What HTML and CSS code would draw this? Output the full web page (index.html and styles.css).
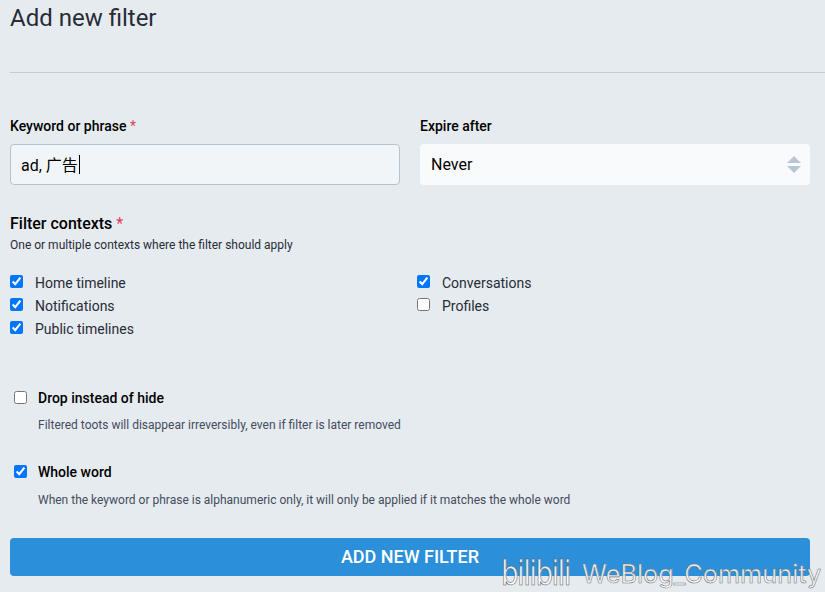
FILE: index.html
```html
<!DOCTYPE html>
<html lang="en">
<head>
<meta charset="utf-8">
<title>Add new filter</title>
<link rel="stylesheet" href="styles.css">
</head>
<body>
<main class="page">
  <h1 class="title">Add new filter</h1>
  <hr class="rule">
  <form class="form">
    <div class="fields">
      <div class="field">
        <label class="label">Keyword or phrase <abbr class="req">*</abbr></label>
        <div class="control control-input"><span class="typed">ad, 广告</span><span class="caret"></span></div>
      </div>
      <div class="field">
        <label class="label">Expire after</label>
        <div class="control control-select">
          <span>Never</span>
          <svg class="updown" width="14" height="17" viewBox="0 0 14 17"><path d="M7 0l7 7H0zM0 10h14l-7 7z" fill="#b9c6d6"/></svg>
        </div>
      </div>
    </div>
    <section class="contexts">
      <h2 class="ctx-title">Filter contexts <abbr class="req">*</abbr></h2>
      <p class="hint">One or multiple contexts where the filter should apply</p>
      <div class="ctx-grid">
        <div class="ctx-col">
          <label class="check"><input type="checkbox" checked>Home timeline</label>
          <label class="check"><input type="checkbox" checked>Notifications</label>
          <label class="check"><input type="checkbox" checked>Public timelines</label>
        </div>
        <div class="ctx-col">
          <label class="check"><input type="checkbox" checked>Conversations</label>
          <label class="check"><input type="checkbox">Profiles</label>
        </div>
      </div>
    </section>
    <div class="option option-drop">
      <label class="opt-label"><input type="checkbox">Drop instead of hide</label>
      <p class="opt-hint">Filtered toots will disappear irreversibly, even if filter is later removed</p>
    </div>
    <div class="option option-whole">
      <label class="opt-label"><input type="checkbox" checked>Whole word</label>
      <p class="opt-hint">When the keyword or phrase is alphanumeric only, it will only be applied if it matches the whole word</p>
    </div>
    <button class="submit" type="button">ADD NEW FILTER</button>
  </form>
</main>
<div class="watermark"><span class="wm-logo">bilibili</span><span class="wm-text">WeBlog_Community</span></div>
</body>
</html>
```

FILE: styles.css
```css
* { box-sizing: border-box; }
html, body { margin: 0; height: 592px; overflow: hidden; }
body {
  background: #e6ebf0;
  color: #000;
  font-family: Roboto, "Noto Sans CJK SC", sans-serif;
  position: relative;
}
.page { padding: 0 15px 0 10px; }
.title {
  margin: 0;
  padding-top: 4px;
  height: 72px;
  font-size: 24px;
  line-height: 28px;
  font-weight: 400;
  color: #282c37;
}
.rule { margin: 0 -15px 0 0; border: 0; height: 1px; background: #c0cdd9; }
.form { padding-top: 44px; }
.fields { display: grid; grid-template-columns: 390px 390px; column-gap: 20px; }
.label { display: block; font-size: 14px; font-weight: 500; line-height: 18px; height: 27px; }
.req { color: #df405a; font-weight: 400; text-decoration: none; }
.control {
  height: 41px;
  border-radius: 4px;
  padding: 0 11px;
  font-size: 16px;
  display: flex;
  align-items: center;
  color: #000;
}
.control-input { background: #f2f5f7; border: 1px solid #b3c3d1; padding: 0 10px; }
.control-select { background: #f9fafb; justify-content: space-between; padding-right: 9px; }
.typed { position: relative; top: -1px; }
.caret { display: inline-block; width: 1px; height: 19px; background: #000; margin-left: 1px; }
.updown { display: block; }
.contexts { margin-top: 29px; }
.ctx-title { margin: 0; font-size: 16px; line-height: 20px; font-weight: 500; }
.hint { margin: 3px 0 0; font-size: 12px; line-height: 16px; color: #282c37; }
.ctx-grid { display: grid; grid-template-columns: 407px 1fr; margin-top: 18px; }
.ctx-col { display: flex; flex-direction: column; }
.check { display: flex; align-items: center; height: 23px; font-size: 14px; color: #282c37; }
.check input { margin: 0 12px 0 0; width: 13px; height: 13px; position: relative; top: -1px; }
.option { padding-left: 4px; }
.option-drop { margin-top: 48px; }
.option-whole { margin-top: 29px; }
.opt-label { display: flex; align-items: center; height: 20px; font-size: 14px; font-weight: 500; color: #000; }
.opt-label input { margin: 0 11px 0 0; width: 13px; height: 13px; position: relative; top: -1px; }
.opt-hint { margin: 9px 0 0 24px; font-size: 12px; line-height: 16px; color: #444b5d; }
.option-whole .opt-hint { margin-top: 10px; }
.submit {
  display: block;
  width: 100%;
  height: 38px;
  margin-top: 30px;
  padding: 0 0 1px;
  border: 0;
  border-radius: 4px;
  background: #2b90d9;
  color: #fff;
  font: 500 18px/36px Roboto, sans-serif;
}
.watermark {
  position: absolute;
  left: 501px;
  top: 556px;
  width: 322px;
  height: 34px;
  display: flex;
  align-items: flex-end;
}
.wm-logo {
  font: 400 34px/34px "DejaVu Sans", sans-serif;
  letter-spacing: -2px;
  width: 74px;
  flex: none;
  display: block;
  transform: scaleX(.82);
  transform-origin: left bottom;
  color: rgba(255,255,255,.9);
  -webkit-text-stroke: .6px #555;
}
.wm-text {
  font: 400 25.3px/32px Inter, sans-serif;
  -webkit-text-stroke: .6px #777;
  white-space: nowrap;
  margin-left: 7px;
  color: rgba(255,255,255,.9);
}
```
